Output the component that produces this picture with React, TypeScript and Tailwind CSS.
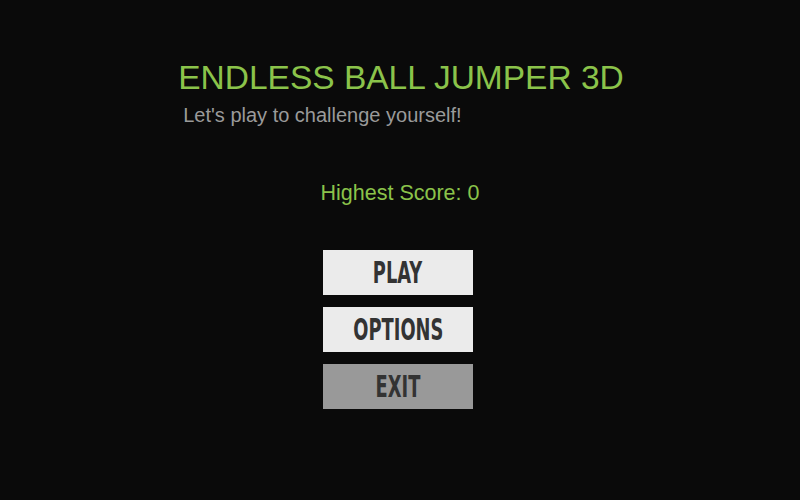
import React from 'react';

const MenuButton: React.FC<{ label: string; disabled?: boolean }> = ({ label, disabled }) => (
  <button
    className={`w-[150px] h-[45px] flex items-center justify-center ${disabled ? 'bg-[#999999]' : 'bg-[#ebebeb]'}`}
  >
    <span
      className="inline-block text-[#333333] text-[31px] font-bold leading-none scale-x-[0.64]"
      style={{ fontFamily: '"DejaVu Sans Condensed", "DejaVu Sans", sans-serif' }}
    >
      {label}
    </span>
  </button>
);

export default function App() {
  return (
    <div
      className="w-[800px] h-[500px] bg-[#0a0a0a] flex flex-col items-center"
      style={{ fontFamily: '"Liberation Sans", Arial, sans-serif' }}
    >
      <div className="flex flex-col items-start mt-[58px] ml-[2px]">
        <h1 className="text-[#8bc34a] text-[33.5px] leading-[40px]">ENDLESS BALL JUMPER 3D</h1>
        <p className="text-[#9a9a9a] text-[20px] leading-[24px] ml-[5px] mt-[5px]">Let's play to challenge yourself!</p>
      </div>
      <div className="text-[#8bc34a] text-[21.5px] leading-[24px] mt-[54px]">Highest Score: 0</div>
      <div className="flex flex-col gap-[12px] mt-[45px] mr-[4px]">
        <MenuButton label="PLAY" />
        <MenuButton label="OPTIONS" />
        <MenuButton label="EXIT" disabled />
      </div>
    </div>
  );
}
